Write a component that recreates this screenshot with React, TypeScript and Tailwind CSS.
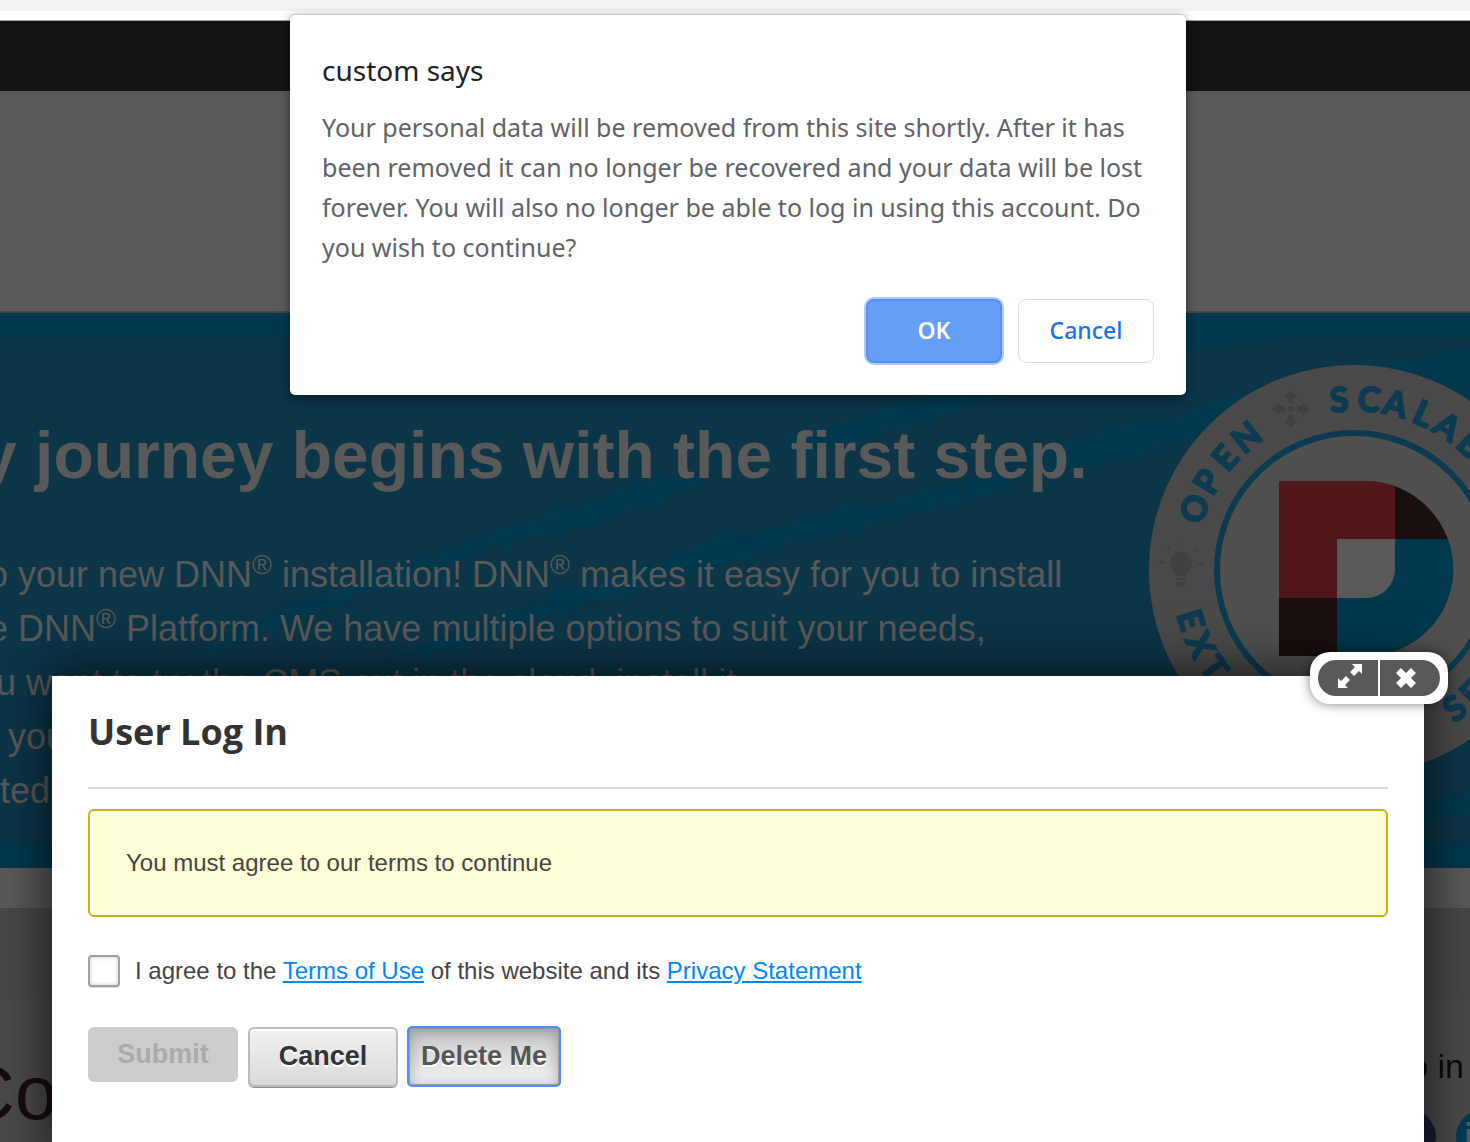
import { useState } from "react";

type RingLetter = { char: string; angle: number; flipped?: boolean };

// angles are degrees clockwise from the top of the badge
const ringLetters: RingLetter[] = [
  { char: "O", angle: -69 },
  { char: "P", angle: -59 },
  { char: "E", angle: -49 },
  { char: "N", angle: -39 },
  { char: "S", angle: -5 },
  { char: "C", angle: 5 },
  { char: "A", angle: 14 },
  { char: "L", angle: 24 },
  { char: "A", angle: 33 },
  { char: "B", angle: 43 },
  { char: "E", angle: 253, flipped: true },
  { char: "X", angle: 244, flipped: true },
  { char: "T", angle: 235, flipped: true },
  { char: "S", angle: 144, flipped: true },
  { char: "E", angle: 136, flipped: true },
];

function Badge() {
  return (
    <g transform="translate(1354 570)">
      <circle r="205" fill="#4a4a4a" />
      <circle r="137" fill="#505050" stroke="#0c3a50" strokeWidth="6" />
      {ringLetters.map(({ char, angle, flipped }, i) => {
        const rad = (angle * Math.PI) / 180;
        const x = 171 * Math.sin(rad);
        const y = -171 * Math.cos(rad);
        return (
          <text
            key={i}
            transform={`translate(${x} ${y}) rotate(${flipped ? angle - 180 : angle})`}
            y="12"
            textAnchor="middle"
            className="fill-[#0c3a50] stroke-[#0c3a50] stroke-2 font-['Lato',sans-serif] text-[34px] font-bold"
          >
            {char}
          </text>
        );
      })}

      {/* four-way arrows */}
      <g transform="translate(-63 -161)" fill="#404143">
        <rect x="-3" y="-3" width="6" height="6" />
        {[0, 90, 180, 270].map((r) => (
          <path key={r} transform={`rotate(${r})`} d="M0-19 6-12V-11H3V-6H-3V-11H-6V-12Z" />
        ))}
      </g>

      {/* light bulb */}
      <g transform="translate(-173 -8)" fill="#404143" stroke="#404143">
        <path
          stroke="none"
          d="M0-10A11 11 0 0 1 11 1C11 6 6 9 6 14H-6C-6 9-11 6-11 1A11 11 0 0 1 0-10ZM-5 16H5V18H-5ZM-5 20H5V22L2 25H-2L-5 22Z"
        />
        <path strokeWidth="2" d="M0-20V-16M-14-15-11-12M16-13 13-11M-22 0H-17M17 2H22" />
      </g>

      {/* D mark */}
      <g transform="translate(-75 -89)">
        <path fill="#51161a" d="M0 0H87Q102 0 116 5V58H58V117H0Z" />
        <path fill="#190f0f" d="M116 5Q154 20 169 58H116ZM0 117H58V175H0Z" />
        <path
          fill="#00384d"
          d="M116 58H169A87 87 0 0 1 87 175H58V117H87A29 29 0 0 0 116 88Z"
        />
        <path fill="#595959" d="M58 58H116V88A29 29 0 0 1 87 117H58Z" />
      </g>
    </g>
  );
}

function HeroArt() {
  return (
    <svg
      className="absolute inset-0 h-full w-full"
      viewBox="0 313 1470 555"
      preserveAspectRatio="xMaxYMid slice"
      aria-hidden="true"
    >
      <filter id="rough" x="-5%" y="-5%" width="110%" height="110%">
        <feTurbulence type="fractalNoise" baseFrequency="0.06" numOctaves="3" seed="4" />
        <feDisplacementMap in="SourceGraphic" scale="16" />
      </filter>
      <rect y="313" width="1470" height="555" fill="#0c3548" />
      <g fill="#00384e">
        <rect y="313" width="1470" height="24" />
        <rect y="845" width="1470" height="23" />
        <path d="M1180 337H1290L1240 343 1180 355Z" />
      </g>
      {/* dry brush strokes */}
      <g fill="#00384e" filter="url(#rough)">
        <path d="M995 462 1080 436 1190 412 1260 390 1340 366 1420 358 1475 346V400L1260 430 1187 442 1085 468 1050 480 1040 466Z" />
        <path d="M190 660 240 632 290 606 350 588 400 568 452 546 520 522 578 508 640 484 700 474 704 484 660 500 584 526 520 540 458 560 400 584 340 602 292 618 240 642Z" />
        <path d="M380 662 440 636 500 618 536 602 600 582 661 562 695 542 745 534 820 514 895 500 960 484 1015 474 1010 488 960 500 900 518 840 534 750 556 700 572 664 578 600 600 540 618 500 634 440 652Z" />
        <path d="M770 450 820 432 870 414 930 396 1000 388 990 402 940 416 880 434 820 450Z" />
        <path d="M1424 806 1475 792V812L1424 820Z" />
      </g>
      <Badge />
    </svg>
  );
}

function Reg() {
  return <sup className="text-[27px]">®</sup>;
}

function SitePage() {
  return (
    <div className="flex min-h-screen flex-col bg-[#4a4a4a] font-['Liberation_Sans',Arial,sans-serif]">
      <div className="h-[11px] bg-[#f1f3f4]" />
      <div className="h-[10px] border-b border-[#a3a5a7] bg-white" />
      <div className="h-[70px] bg-[#131313]" />
      <div className="h-[222px] border-b-2 border-[#444648] bg-[#595959]" />

      <section className="relative h-[555px] overflow-hidden whitespace-nowrap text-[#595959]">
        <HeroArt />
        <div className="relative pt-[106px]">
          <h1 className="-ml-5 text-[66px] leading-[72px] font-bold">
            y journey begins with the first step.
          </h1>
          <div className="mt-[57px] text-[36px] leading-[54px]">
            <p className="-ml-3">
              o your new DNN
              <Reg /> installation! DNN
              <Reg /> makes it easy for you to install
            </p>
            <p className="-ml-3">
              e DNN
              <Reg /> Platform. We have multiple options to suit your needs,
            </p>
            <p className="-ml-1">u want to try the CMS out in the cloud, install it</p>
            <p className="ml-2">you</p>
            <p>ted</p>
          </div>
        </div>
      </section>

      <div className="h-10 bg-[#595959]" />
      <div className="h-[91px] bg-[#484848]" />
      <section className="flex flex-1 justify-between overflow-hidden">
        <h2 className="-ml-10 pt-[50px] text-[76px] leading-[88px] text-[#180b0d]">Co</h2>
        <div className="pt-[47px] text-right">
          <p className="pr-[6px] text-[34px] leading-10 text-[#0a0a0a]">o in</p>
          <div className="-mr-[42px] flex justify-end gap-5 pt-[23px]">
            <span className="size-14 rounded-full bg-[#171c33]" />
            <span className="size-14 rounded-full bg-[#003a56] pt-2 pl-2 text-left text-[36px] leading-10 font-bold text-[#595959]">
              in
            </span>
          </div>
        </div>
      </section>
    </div>
  );
}

function ModalControls() {
  return (
    <div className="absolute -top-6 -right-6 flex gap-[2px] rounded-[20px] bg-white p-2 shadow-[0_0_12px_rgba(0,0,0,0.5)]">
      <button
        aria-label="Maximize"
        className="flex h-9 w-[60px] items-center justify-center rounded-l-[18px] bg-[#595959] pb-1 pl-1"
      >
        <svg width="24" height="24" viewBox="0 0 24 24" fill="#fff">
          <path d="M14 0H24V10L21 7 16 12 12 8 17 3ZM0 24V14L3 17 8 12 12 16 7 21 10 24Z" />
        </svg>
      </button>
      <button
        aria-label="Close"
        className="flex h-9 w-[60px] items-center justify-center rounded-r-[18px] bg-[#595959] pr-2"
      >
        <svg width="20" height="20" viewBox="0 0 20 20" stroke="#fff" strokeWidth="7">
          <path d="M2.5 2.5 17.5 17.5M17.5 2.5 2.5 17.5" />
        </svg>
      </button>
    </div>
  );
}

function LoginModal() {
  const [agreed, setAgreed] = useState(false);

  return (
    <div
      role="dialog"
      aria-labelledby="login-title"
      className="absolute top-[676px] right-[46px] bottom-0 left-[52px] bg-white px-9 pt-8 font-['Liberation_Sans',Arial,sans-serif] text-[24px] leading-8 text-[#444] shadow-[0_0_50px_rgba(0,0,0,0.75)]"
    >
      <ModalControls />
      <h2
        id="login-title"
        className="border-b-2 border-[#ddd] pb-[31px] font-['Open_Sans',sans-serif] text-[36px] leading-12 font-bold text-[#333]"
      >
        User Log In
      </h2>

      <div className="mt-5 rounded-md border-2 border-[#cab21e] bg-[#ffffd8] px-9 py-9">
        You must agree to our terms to continue
      </div>

      <div className="mt-[38px] flex items-center gap-[15px]">
        <input
          id="agree"
          type="checkbox"
          checked={agreed}
          onChange={(e) => setAgreed(e.target.checked)}
          className="size-8 appearance-none rounded border-2 border-[#a0a0a0] bg-white shadow-[inset_0_0_5px_rgba(0,0,0,0.2),0_1px_1px_rgba(0,0,0,0.15)] checked:bg-[#0087ff]"
        />
        <label htmlFor="agree">
          I agree to the{" "}
          <a href="#terms" className="text-[#0087ff] underline">
            Terms of Use
          </a>{" "}
          of this website and its{" "}
          <a href="#privacy" className="text-[#0087ff] underline">
            Privacy Statement
          </a>
        </label>
      </div>

      <div className="mt-10 flex items-start gap-[10px] text-[27px] font-bold">
        <button disabled className="h-[55px] w-[150px] rounded-md bg-[#ccc] pb-[2px] text-[#aaa]">
          Submit
        </button>
        <button className="h-[60px] w-[150px] rounded-md border-2 border-[#bbb] bg-linear-to-b from-[#f2f2f2] to-[#d9d9d9] pb-[2px] text-[#333] shadow-[0_1px_0_#8f8f8f,inset_0_2px_0_#fff] [text-shadow:0_2px_0_#fff]">
          Cancel
        </button>
        <button className="h-[59px] w-[152px] rounded-sm border-2 border-[#999] bg-linear-to-b from-[#c8c8c8] to-[#f4f4f4] pb-[2px] text-[#555] shadow-[inset_0_2px_12px_2px_rgba(0,0,0,0.22)] outline-2 -outline-offset-1 outline-[#4d90fe] [text-shadow:0_2px_0_#fff]">
          Delete Me
        </button>
      </div>
    </div>
  );
}

function ConfirmAlert() {
  return (
    <div className="absolute inset-x-0 top-[14px] flex justify-center pl-[6px]">
      <div
        role="alertdialog"
        aria-labelledby="alert-title"
        className="w-[896px] rounded-[5px] border-t border-[#c8c8c8] bg-white px-8 pt-[35px] pb-8 font-['Noto_Sans',sans-serif] shadow-[0_3px_10px_rgba(0,0,0,0.5)]"
      >
        <h2 id="alert-title" className="text-[28px] leading-10 text-[#202124]">
          custom says
        </h2>
        <p className="mt-[17px] text-[25px] leading-10 text-[#5f6368]">
          Your personal data will be removed from this site shortly. After it has been removed it
          can no longer be recovered and your data will be lost forever. You will also no longer be
          able to log in using this account. Do you wish to continue?
        </p>
        <div className="mt-8 flex justify-end gap-4 text-[23px] font-medium">
          <button className="h-16 w-[136px] rounded-lg border-2 border-[#5391f5] bg-[#669df6] pb-[2px] font-semibold text-white ring-2 ring-[#aecbfa]">
            OK
          </button>
          <button className="h-16 w-[136px] rounded-lg border border-[#dadce0] pb-[2px] text-[#1a73e8]">
            Cancel
          </button>
        </div>
      </div>
    </div>
  );
}

export default function App() {
  return (
    <main className="relative min-h-screen overflow-hidden">
      <SitePage />
      <LoginModal />
      <ConfirmAlert />
    </main>
  );
}
